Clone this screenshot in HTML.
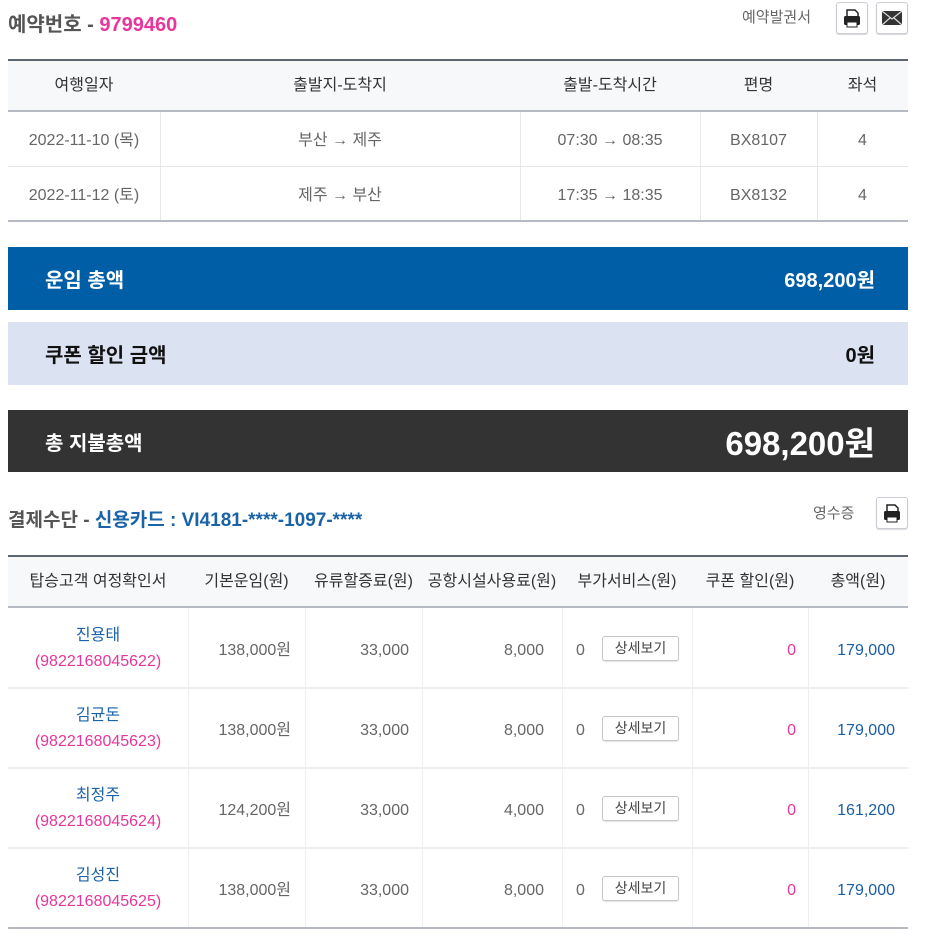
<!DOCTYPE html>
<html><head><meta charset="utf-8">
<style>
*{margin:0;padding:0;box-sizing:border-box}
body{width:929px;height:950px;background:#fff;font-family:"Liberation Sans","Noto Sans CJK KR",sans-serif;position:relative;overflow:hidden;color:#555}
.a{position:absolute}
.btn{position:absolute;width:32px;height:32px;border:1px solid #c9ccd2;border-radius:3px;background:#fff;box-shadow:0 1px 1px rgba(0,0,0,.15)}
.c{display:flex;align-items:center;justify-content:center;position:absolute;line-height:20px}
.bar{position:absolute;left:8px;width:900px;display:flex;align-items:center;justify-content:space-between;padding:0 33px 0 37px;font-weight:bold}
.dbtn{position:absolute;width:77px;height:25px;border:1px solid #c4c7cc;border-radius:3px;background:#fff;font-size:14px;color:#444;line-height:23px;text-align:center;box-shadow:0 1px 1px rgba(0,0,0,.12)}
.r .a{line-height:20px}
</style></head><body>
<div class="a" style="left:8px;top:8px;font-size:20px;font-weight:bold;color:#555">예약번호 - <span style="color:#e8369a">9799460</span></div>
<div class="a" style="left:742px;top:6px;font-size:15px;color:#666">예약발권서</div>
<div class="btn" style="left:836px;top:2px"><svg width="30" height="30" viewBox="0 0 30 30"><path d="M10 7h8l3 3v4H10z" fill="#fff" stroke="#222" stroke-width="1.5"/><rect x="7" y="13" width="16" height="9" rx="1.5" fill="#222"/><rect x="10" y="19" width="10" height="5" fill="#fff" stroke="#222"/></svg></div>
<div class="btn" style="left:876px;top:2px"><svg width="30" height="30" viewBox="0 0 30 30"><rect x="5" y="8" width="20" height="14" fill="#333"/><path d="M5 8l10 8 10-8M5 22l8-7M25 22l-8-7" stroke="#ddd" stroke-width="1.2" fill="none"/></svg></div>

<div class="a" style="left:8px;top:59px;width:900px;height:2px;background:#5c6570"></div>
<div class="a" style="left:8px;top:61px;width:900px;height:50px;background:#f7f8fa"></div>
<div class="a" style="left:8px;top:110px;width:900px;height:2px;background:#b6bbc3"></div>
<div class="a" style="left:8px;top:166px;width:900px;height:1px;background:#e8e8e8"></div>
<div class="a" style="left:8px;top:220px;width:900px;height:2px;background:#b6bbc3"></div>
<div class="a" style="left:160px;top:112px;width:1px;height:108px;background:#e8e8e8"></div>
<div class="a" style="left:520px;top:112px;width:1px;height:108px;background:#e8e8e8"></div>
<div class="a" style="left:700px;top:112px;width:1px;height:108px;background:#e8e8e8"></div>
<div class="a" style="left:817px;top:112px;width:1px;height:108px;background:#e8e8e8"></div>
<div style="font-size:16px;color:#333">
<div class="c" style="left:8px;top:61px;width:152px;height:50px">여행일자</div>
<div class="c" style="left:160px;top:61px;width:360px;height:50px">출발지-도착지</div>
<div class="c" style="left:520px;top:61px;width:180px;height:50px">출발-도착시간</div>
<div class="c" style="left:700px;top:61px;width:117px;height:50px">편명</div>
<div class="c" style="left:817px;top:61px;width:91px;height:50px">좌석</div>
</div>
<div style="font-size:16px;color:#666">
<div class="c" style="left:8px;top:114px;width:152px;height:54px">2022-11-10 (목)</div>
<div class="c" style="left:160px;top:114px;width:360px;height:54px">부산 → 제주</div>
<div class="c" style="left:520px;top:114px;width:180px;height:54px">07:30 → 08:35</div>
<div class="c" style="left:700px;top:114px;width:117px;height:54px">BX8107</div>
<div class="c" style="left:817px;top:114px;width:91px;height:54px">4</div>
<div class="c" style="left:8px;top:169px;width:152px;height:54px">2022-11-12 (토)</div>
<div class="c" style="left:160px;top:169px;width:360px;height:54px">제주 → 부산</div>
<div class="c" style="left:520px;top:169px;width:180px;height:54px">17:35 → 18:35</div>
<div class="c" style="left:700px;top:169px;width:117px;height:54px">BX8132</div>
<div class="c" style="left:817px;top:169px;width:91px;height:54px">4</div>
</div>

<div class="bar" style="top:247px;height:63px;background:#005ea7;color:#fff;font-size:20px"><span>운임 총액</span><span>698,200원</span></div>
<div class="bar" style="top:322px;height:63px;background:#dbe3f3;color:#111;font-size:20px"><span>쿠폰 할인 금액</span><span>0원</span></div>
<div class="bar" style="top:410px;height:62px;background:#333;color:#fff;font-size:20px"><span>총 지불총액</span><span style="font-size:33px">698,200원</span></div>

<div class="a" style="left:8px;top:505px;font-size:19px;font-weight:bold;color:#555">결제수단 - <span style="color:#1a63a8">신용카드 : VI4181-****-1097-****</span></div>
<div class="a" style="left:813px;top:502px;font-size:15px;color:#666">영수증</div>
<div class="btn" style="left:876px;top:497px"><svg width="30" height="30" viewBox="0 0 30 30"><path d="M10 7h8l3 3v4H10z" fill="#fff" stroke="#222" stroke-width="1.5"/><rect x="7" y="13" width="16" height="9" rx="1.5" fill="#222"/><rect x="10" y="19" width="10" height="5" fill="#fff" stroke="#222"/></svg></div>

<div class="a" style="left:8px;top:555px;width:900px;height:2px;background:#5c6570"></div>
<div class="a" style="left:8px;top:557px;width:900px;height:50px;background:#f7f8fa"></div>
<div class="a" style="left:8px;top:606px;width:900px;height:2px;background:#b6bbc3"></div>
<div class="a" style="left:8px;top:687px;width:900px;height:2px;background:#eee"></div>
<div class="a" style="left:8px;top:767px;width:900px;height:2px;background:#eee"></div>
<div class="a" style="left:8px;top:847px;width:900px;height:2px;background:#eee"></div>
<div class="a" style="left:8px;top:927px;width:900px;height:2px;background:#b6bbc3"></div>
<div class="a" style="left:188px;top:608px;width:1px;height:319px;background:#eee"></div>
<div class="a" style="left:305px;top:608px;width:1px;height:319px;background:#eee"></div>
<div class="a" style="left:422px;top:608px;width:1px;height:319px;background:#eee"></div>
<div class="a" style="left:562px;top:608px;width:1px;height:319px;background:#eee"></div>
<div class="a" style="left:692px;top:608px;width:1px;height:319px;background:#eee"></div>
<div class="a" style="left:808px;top:608px;width:1px;height:319px;background:#eee"></div>
<div style="font-size:16px;color:#333">
<div class="c" style="left:8px;top:557px;width:180px;height:50px">탑승고객 여정확인서</div>
<div class="c" style="left:188px;top:557px;width:117px;height:50px">기본운임(원)</div>
<div class="c" style="left:305px;top:557px;width:117px;height:50px">유류할증료(원)</div>
<div class="c" style="left:422px;top:557px;width:140px;height:50px">공항시설사용료(원)</div>
<div class="c" style="left:562px;top:557px;width:130px;height:50px">부가서비스(원)</div>
<div class="c" style="left:692px;top:557px;width:116px;height:50px">쿠폰 할인(원)</div>
<div class="c" style="left:808px;top:557px;width:100px;height:50px">총액(원)</div>
</div>

<div class="r" style="font-size:16px;color:#666">
<div class="a" style="left:8px;top:623px;width:180px;text-align:center;line-height:26px!important"><span style="color:#1a63a8">진용태</span><br><span style="color:#e8369a">(9822168045622)</span></div>
<div class="a" style="left:188px;top:641px;width:103px;text-align:right">138,000원</div>
<div class="a" style="left:305px;top:641px;width:104px;text-align:right">33,000</div>
<div class="a" style="left:422px;top:641px;width:122px;text-align:right">8,000</div>
<div class="a" style="left:576px;top:641px">0</div><div class="dbtn" style="left:602px;top:636px">상세보기</div>
<div class="a" style="left:692px;top:641px;width:104px;text-align:right;color:#e8369a">0</div>
<div class="a" style="left:808px;top:641px;width:87px;text-align:right;color:#1a5ea3">179,000</div>

<div class="a" style="left:8px;top:703px;width:180px;text-align:center;line-height:26px!important"><span style="color:#1a63a8">김균돈</span><br><span style="color:#e8369a">(9822168045623)</span></div>
<div class="a" style="left:188px;top:721px;width:103px;text-align:right">138,000원</div>
<div class="a" style="left:305px;top:721px;width:104px;text-align:right">33,000</div>
<div class="a" style="left:422px;top:721px;width:122px;text-align:right">8,000</div>
<div class="a" style="left:576px;top:721px">0</div><div class="dbtn" style="left:602px;top:716px">상세보기</div>
<div class="a" style="left:692px;top:721px;width:104px;text-align:right;color:#e8369a">0</div>
<div class="a" style="left:808px;top:721px;width:87px;text-align:right;color:#1a5ea3">179,000</div>

<div class="a" style="left:8px;top:783px;width:180px;text-align:center;line-height:26px!important"><span style="color:#1a63a8">최정주</span><br><span style="color:#e8369a">(9822168045624)</span></div>
<div class="a" style="left:188px;top:801px;width:103px;text-align:right">124,200원</div>
<div class="a" style="left:305px;top:801px;width:104px;text-align:right">33,000</div>
<div class="a" style="left:422px;top:801px;width:122px;text-align:right">4,000</div>
<div class="a" style="left:576px;top:801px">0</div><div class="dbtn" style="left:602px;top:796px">상세보기</div>
<div class="a" style="left:692px;top:801px;width:104px;text-align:right;color:#e8369a">0</div>
<div class="a" style="left:808px;top:801px;width:87px;text-align:right;color:#1a5ea3">161,200</div>

<div class="a" style="left:8px;top:863px;width:180px;text-align:center;line-height:26px!important"><span style="color:#1a63a8">김성진</span><br><span style="color:#e8369a">(9822168045625)</span></div>
<div class="a" style="left:188px;top:881px;width:103px;text-align:right">138,000원</div>
<div class="a" style="left:305px;top:881px;width:104px;text-align:right">33,000</div>
<div class="a" style="left:422px;top:881px;width:122px;text-align:right">8,000</div>
<div class="a" style="left:576px;top:881px">0</div><div class="dbtn" style="left:602px;top:876px">상세보기</div>
<div class="a" style="left:692px;top:881px;width:104px;text-align:right;color:#e8369a">0</div>
<div class="a" style="left:808px;top:881px;width:87px;text-align:right;color:#1a5ea3">179,000</div>
</div>
</body></html>
